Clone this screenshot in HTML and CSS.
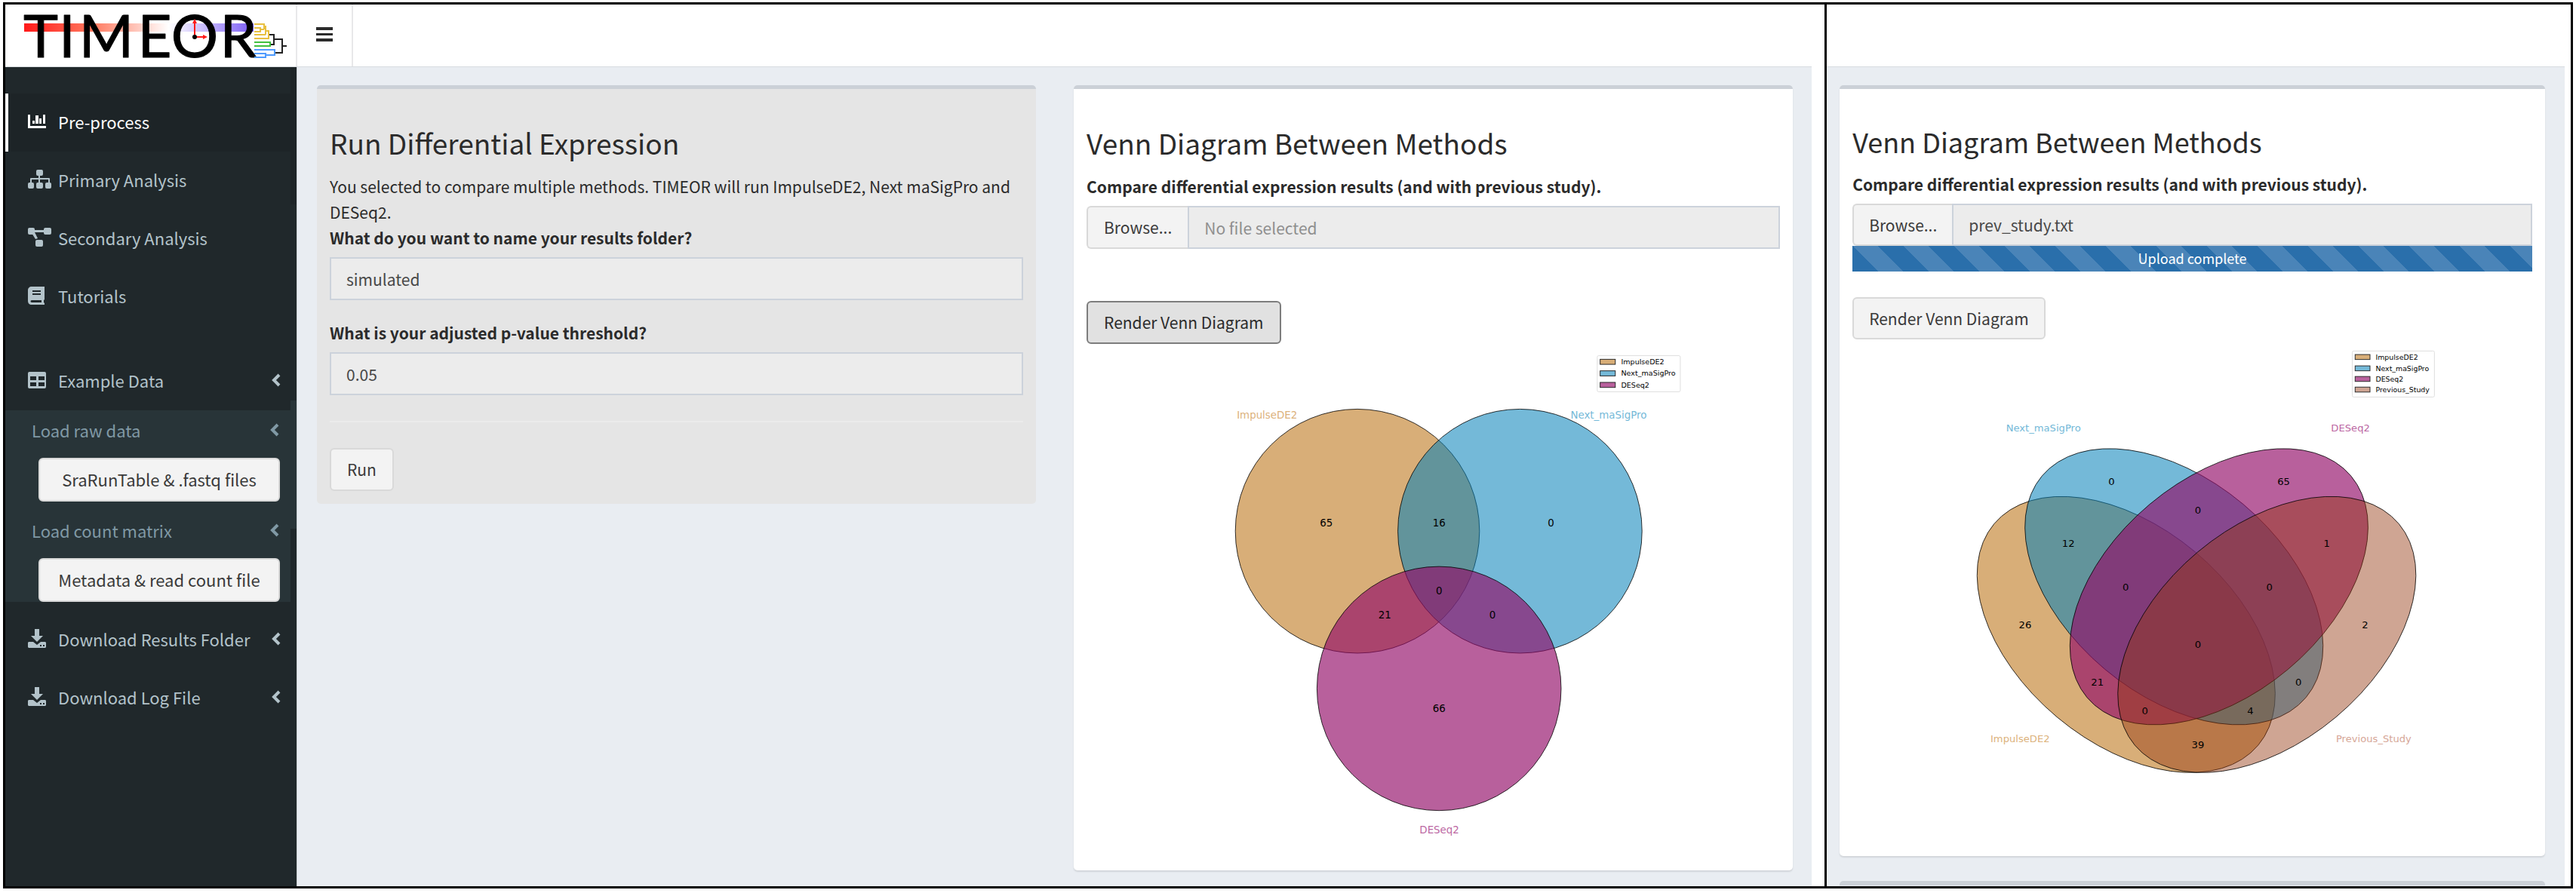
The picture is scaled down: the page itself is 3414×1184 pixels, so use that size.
FILE: index.html
```html
<!DOCTYPE html>
<html lang="en">
<head>
<meta charset="utf-8">
<title>TIMEOR</title>
<link rel="stylesheet" href="styles.css">
</head>
<body>
<div class="frame">
  <section class="pane pane-main">
    <header class="topbar">
      <a class="logo" href="#" aria-label="TIMEOR">
        <svg viewBox="0 0 379 82" width="379" height="82">
          <defs>
            <linearGradient id="heat">
              <stop offset="0" stop-color="#ff1a1a"/>
              <stop offset="0.3" stop-color="#ff7a60"/>
              <stop offset="0.63" stop-color="#ffffff"/>
              <stop offset="1" stop-color="#7b5cf5"/>
            </linearGradient>
          </defs>
          <rect x="25" y="25" width="304" height="11" fill="url(#heat)"/>
          <text class="logo-text" x="47 82 134 198 251 309" y="70">TIMEOR</text>
          <g stroke="#ff1a1a" stroke-width="2" fill="#ff1a1a">
            <path d="M251 43V24M251 43H264" fill="none"/>
            <path d="M251 19l3 6h-6zM268 43l-6 3v-6z" stroke="none"/>
          </g>
          <circle cx="251" cy="43" r="3"/>
          <g fill="none" stroke-width="2">
            <path stroke="#e8c040" d="M330 26H343V33M330 31H338V36H330M338 33H343M343 29H345V40M330 40H345M345 35H349V45H330"/>
            <path stroke="#40c040" d="M330 50H351V55H330"/>
            <path stroke="#4f9bff" d="M330 60H357V67H345M330 65H345V70H330"/>
            <path stroke="#222" d="M350 40H356V53H352M356 46H367V64H358M367 55H373"/>
          </g>
        </svg>
      </a>
      <button class="toggle" type="button" aria-label="Toggle navigation">
        <svg viewBox="0 0 22 19" width="22" height="19"><path d="M0 0h22v4H0zM0 8h22v3H0zM0 15h22v4H0z"/></svg>
      </button>
    </header>
    <div class="body">
      <nav class="sidebar">
        <ul class="menu">
          <li><a class="item active" href="#">
            <svg class="icon" viewBox="0 0 32 26"><path d="M0 4h3v15h21v3H0zM6 12h3v4H6zM10 5h4v11h-4zM15 9h3v7h-3zM20 4h3v12h-3z"/></svg>
            Pre-process</a></li>
          <li><a class="item" href="#">
            <svg class="icon" viewBox="0 0 32 26"><rect x="11" y="0" width="9" height="8" rx="2"/><rect x="0" y="17" width="8" height="8" rx="2"/><rect x="11" y="17" width="9" height="8" rx="2"/><rect x="23" y="17" width="8" height="8" rx="2"/><path d="M14 7h2v4h12q1 0 1 1v5h-2v-4H16v4h-2v-4H5v4H3v-5q0-1 1-1h10z"/></svg>
            Primary Analysis</a></li>
          <li><a class="item" href="#">
            <svg class="icon" viewBox="0 0 32 26"><rect x="0" y="0" width="9" height="9" rx="2"/><rect x="21" y="0" width="10" height="9" rx="2"/><rect x="10" y="16" width="10" height="9" rx="2"/><path d="M8 3h13v3H9l4 8-3 1-5-8z"/></svg>
            Secondary Analysis</a></li>
          <li><a class="item" href="#">
            <svg class="icon" viewBox="0 0 32 26"><path fill-rule="evenodd" d="M5 1h17v17l-1 1v3l1 1v2H5c-3 0-5-2-5-5V6c0-3 2-5 5-5zM6 6v2h11V6zM6 10v2h11v-2zM5 19c-2 0-2 3 0 3h13v-3z"/></svg>
            Tutorials</a></li>
          <li class="spaced"><a class="item" href="#">
            <svg class="icon" viewBox="0 0 32 26"><path fill-rule="evenodd" d="M2 2h20q2 0 2 2v18q0 2-2 2H2q-2 0-2-2V4q0-2 2-2zM3 8v5h8V8zM14 8v5h8V8zM3 16v5h8v-5zM14 16v5h8v-5z"/></svg>
            Example Data
            <svg class="chevron" viewBox="0 0 12 18"><path d="M10 2L3 9l7 7"/></svg></a>
            <div class="submenu">
              <a class="subitem" href="#">Load raw data<svg class="chevron" viewBox="0 0 12 18"><path d="M10 2L3 9l7 7"/></svg></a>
              <button class="btn side-btn" type="button">SraRunTable &amp; .fastq files</button>
              <a class="subitem" href="#">Load count matrix<svg class="chevron" viewBox="0 0 12 18"><path d="M10 2L3 9l7 7"/></svg></a>
              <button class="btn side-btn" type="button">Metadata &amp; read count file</button>
            </div></li>
          <li><a class="item" href="#">
            <svg class="icon" viewBox="0 0 32 26"><path fill-rule="evenodd" d="M9 0h6v9h5l-8 8-8-8h5zM1 17h6l5 4 5-4h6l1 1v6l-1 1H1l-1-1v-6zM16 21v2h2v-2zM20 21v2h2v-2z"/></svg>
            Download Results Folder
            <svg class="chevron" viewBox="0 0 12 18"><path d="M10 2L3 9l7 7"/></svg></a></li>
          <li><a class="item" href="#">
            <svg class="icon" viewBox="0 0 32 26"><path fill-rule="evenodd" d="M9 0h6v9h5l-8 8-8-8h5zM1 17h6l5 4 5-4h6l1 1v6l-1 1H1l-1-1v-6zM16 21v2h2v-2zM20 21v2h2v-2z"/></svg>
            Download Log File
            <svg class="chevron" viewBox="0 0 12 18"><path d="M10 2L3 9l7 7"/></svg></a></li>
        </ul>
      </nav>
      <main class="content">
        <section class="box box-muted">
          <h3>Run Differential Expression</h3>
          <p>You selected to compare multiple methods. TIMEOR will run ImpulseDE2, Next maSigPro and DESeq2.</p>
          <label class="field-label" for="folder">What do you want to name your results folder?</label>
          <input class="control" id="folder" type="text" value="simulated">
          <label class="field-label next" for="pvalue">What is your adjusted p-value threshold?</label>
          <input class="control" id="pvalue" type="text" value="0.05">
          <hr>
          <button class="btn" type="button">Run</button>
        </section>
        <section class="box">
          <h3>Venn Diagram Between Methods</h3>
          <label class="field-label" for="file-a">Compare differential expression results (and with previous study).</label>
          <div class="file-group">
            <label class="btn browse">Browse...<input class="file-input" id="file-a" type="file"></label>
            <input class="control" type="text" placeholder="No file selected" aria-label="Selected file" readonly>
          </div>
          <div class="progress-slot"></div>
          <button class="btn pressed" type="button">Render Venn Diagram</button>
          <svg class="plot" viewBox="0 0 960 705" role="img" aria-label="Three-way Venn diagram">
            <g class="shapes">
              <circle class="impulse" cx="375" cy="253" r="169"/>
              <circle class="next-ma" cx="600" cy="253" r="169"/>
              <circle class="deseq" cx="488" cy="471" r="169"/>
            </g>
            <g class="counts">
              <text x="332" y="246">65</text><text x="488" y="246">16</text><text x="643" y="246">0</text>
              <text x="488" y="341">0</text><text x="413" y="374">21</text><text x="562" y="374">0</text>
              <text x="488" y="503">66</text>
            </g>
            <text class="name-impulse" x="208" y="97">ImpulseDE2</text>
            <text class="name-next" x="670" y="97">Next_maSigPro</text>
            <text class="name-deseq" x="461" y="672">DESeq2</text>
            <g class="legend">
              <rect class="legend-box" x="707" y="10" width="115" height="50" rx="2"/>
              <rect class="impulse" x="711" y="15" width="21" height="7"/><text x="740" y="22">ImpulseDE2</text>
              <rect class="next-ma" x="711" y="31" width="21" height="7"/><text x="740" y="38">Next_maSigPro</text>
              <rect class="deseq" x="711" y="47" width="21" height="7"/><text x="740" y="54">DESeq2</text>
            </g>
          </svg>
        </section>
      </main>
    </div>
  </section>
  <section class="pane pane-side">
    <div class="topbar"></div>
    <div class="content content-side">
      <section class="box">
        <h3>Venn Diagram Between Methods</h3>
        <label class="field-label" for="file-b">Compare differential expression results (and with previous study).</label>
        <div class="file-group">
          <label class="btn browse">Browse...<input class="file-input" id="file-b" type="file"></label>
          <input class="control" type="text" value="prev_study.txt" aria-label="Selected file" readonly>
        </div>
        <div class="progress-slot"><div class="progress-bar">Upload complete</div></div>
        <button class="btn" type="button">Render Venn Diagram</button>
        <svg class="plot" viewBox="0 0 960 705" role="img" aria-label="Four-way Venn diagram">
          <g class="shapes" transform="translate(150 681) scale(676 -676)">
            <ellipse class="impulse" rx="0.36" ry="0.225" transform="translate(0.35 0.4) rotate(140)"/>
            <ellipse class="next-ma" rx="0.36" ry="0.225" transform="translate(0.45 0.5) rotate(140)"/>
            <ellipse class="deseq" rx="0.36" ry="0.225" transform="translate(0.544 0.5) rotate(40)"/>
            <ellipse class="previous" rx="0.36" ry="0.225" transform="translate(0.644 0.4) rotate(40)"/>
          </g>
          <g class="counts">
            <text x="244" y="402">26</text><text x="305" y="287">12</text><text x="366" y="199">0</text>
            <text x="488" y="240">0</text><text x="609" y="199">65</text><text x="670" y="287">1</text>
            <text x="724" y="402">2</text><text x="386" y="348">0</text><text x="589" y="348">0</text>
            <text x="488" y="429">0</text><text x="346" y="483">21</text><text x="630" y="483">0</text>
            <text x="413" y="523">0</text><text x="562" y="523">4</text><text x="488" y="571">39</text>
          </g>
          <text class="name-impulse" x="195" y="563">ImpulseDE2</text>
          <text class="name-next" x="217" y="124">Next_maSigPro</text>
          <text class="name-deseq" x="676" y="124">DESeq2</text>
          <text class="name-previous" x="683" y="563">Previous_Study</text>
          <g class="legend">
            <rect class="legend-box" x="706" y="10" width="116" height="65" rx="2"/>
            <rect class="impulse" x="710" y="15" width="21" height="7"/><text x="739" y="22">ImpulseDE2</text>
            <rect class="next-ma" x="710" y="31" width="21" height="7"/><text x="739" y="38">Next_maSigPro</text>
            <rect class="deseq" x="710" y="46" width="21" height="7"/><text x="739" y="53">DESeq2</text>
            <rect class="previous" x="710" y="61" width="21" height="7"/><text x="739" y="68">Previous_Study</text>
          </g>
        </svg>
      </section>
      <div class="box-edge"></div>
    </div>
  </section>
</div>
</body>
</html>
```
FILE: styles.css
```css
* { box-sizing: border-box; }
body {
  margin: 0;
  padding: 3px 4px 6px 4px;
  background: #fff;
  color: #2b2b2b;
  font: 21px/34px "Noto Sans CJK SC", "Open Sans", sans-serif;
}
.frame {
  display: flex;
  min-height: calc(100vh - 9px);
  border: 3px solid #000;
}
.pane { display: flex; flex-direction: column; min-width: 0; }
.pane-main { flex: 2414 1 0; padding-right: 17px; border-right: 3px solid #000; }
.pane-side { flex: 986 1 0; padding-right: 8px; }

.topbar { display: flex; height: 83px; border-bottom: 1px solid #d8dce0; }
.logo { width: 387px; border-right: 2px solid #e8e8ea; }
.logo svg { display: block; overflow: visible; }
.logo-text {
  font: 78px/78px Lato, sans-serif;
  text-anchor: middle;
  fill: #000;
  stroke: #000;
  stroke-width: 1px;
  stroke-linejoin: round;
}
.toggle { width: 74px; padding: 0; border: 0; border-right: 2px solid #e8e8ea; background: none; }
.toggle svg { fill: #2b2b2b; display: block; margin: -4px auto 0; }

.body { display: flex; flex: 1; }
.sidebar {
  flex: 0 0 387px;
  padding: 35px 8px 0 0;
  border-right: 1px solid #c8cdd2;
  background: linear-gradient(#1d2427 182px, #20282b 182px 442px, #283438 442px 612px, #20282b 612px) right / 8px 100% no-repeat #20282b;
  font-size: 22px;
}
.menu { list-style: none; margin: 0; padding: 0; }
.item {
  display: flex;
  align-items: center;
  height: 77px;
  padding: 0 13px 3px 26px;
  border-left: 4px solid transparent;
  color: #b3c3ca;
  text-decoration: none;
}
.active { background: #1d2427; border-left-color: #fff; color: #fff; }
.icon { width: 32px; height: 26px; margin-right: 8px; fill: currentColor; }
.chevron { width: 12px; height: 18px; margin-left: auto; fill: none; stroke: currentColor; stroke-width: 4; }
.spaced { margin: 35px 0 12px; }
.submenu { background: #283438; }
.subitem {
  display: flex;
  align-items: center;
  height: 55px;
  padding: 0 15px 4px 35px;
  color: #8099a5;
  text-decoration: none;
}
.submenu .side-btn { display: block; width: 320px; height: 58px; margin: 8px 0 12px 44px; padding: 0 0 2px; }
.submenu .side-btn:last-child { margin-bottom: 0; }

.content {
  display: grid;
  grid-template-columns: 1fr 1fr;
  gap: 50px;
  align-items: start;
  flex: 1;
  padding: 24px 25px 21px 26px;
  background: #e9edf2;
}
.content-side { grid-template-columns: 1fr; gap: 33px; align-content: start; padding: 24px 26px 0 17px; }
.box {
  padding: 17px;
  border-top: 5px solid #cbd0d7;
  border-radius: 5px;
  background: #fff;
  box-shadow: 0 2px 2px rgba(0, 0, 0, 0.1);
}
.box-muted { background: #e5e5e5; box-shadow: none; }
.box-edge { height: 6px; border-radius: 5px 5px 0 0; background: #cbd0d7; }
h3 { margin: 32px 0 18px; font-size: 37px; line-height: 45px; font-weight: 400; }
p { margin: 0; }
.field-label { display: block; margin-bottom: 9px; font-weight: 700; }
.next { margin-top: 26px; }
.control {
  display: block;
  width: 100%;
  height: 57px;
  padding: 0 20px;
  border: 2px solid #ccd2db;
  border-radius: 0;
  background: #ececec;
  color: #484848;
  font: inherit;
}
.control::placeholder { color: #8f8f8f; opacity: 1; }
hr { margin: 34px 0; border: 0; border-top: 2px solid #ebebeb; }
.btn {
  height: 57px;
  padding: 0 21px 1px;
  border: 2px solid #d9d9d9;
  border-radius: 6px;
  background: #f3f3f3;
  color: #3a3a3a;
  font: inherit;
}
.pressed { border-color: #7d7d7d; background: #e1e1e1; color: #2b2b2b; }
.file-group { display: flex; }
.browse { display: flex; align-items: center; border-right: 0; border-radius: 6px 0 0 6px; white-space: nowrap; }
.file-input { position: absolute; width: 1px; height: 1px; opacity: 0; }
.file-group .control { flex: 1; width: auto; min-width: 0; }
.progress-slot { height: 34px; margin-bottom: 35px; }
.progress-bar {
  height: 34px;
  color: #fff;
  font-size: 18px;
  line-height: 32px;
  text-align: center;
  background-color: #2a6fab;
  background-image: linear-gradient(45deg, rgba(255,255,255,.15) 25%, transparent 25%, transparent 50%, rgba(255,255,255,.15) 50%, rgba(255,255,255,.15) 75%, transparent 75%);
  background-size: 67px 67px;
}
.content-side h3 { margin: 30px 0 17px; font-size: 36px; }
.content-side .btn, .content-side .control { height: 56px; }
.content-side .btn { padding: 0 20px 1px; }
.content-side .progress-slot { margin-bottom: 34px; }

.plot { display: block; width: 100%; margin-top: 6px; font: 14px "DejaVu Sans", sans-serif; }
.shapes * { stroke: rgba(0, 0, 0, 0.8); stroke-width: 1px; vector-effect: non-scaling-stroke; }
.impulse { fill: rgba(190, 120, 30, 0.6); }
.next-ma { fill: rgba(2, 128, 184, 0.55); }
.deseq { fill: rgba(146, 10, 103, 0.65); }
.previous { fill: rgba(149, 55, 15, 0.45); }
.counts { text-anchor: middle; fill: #000; }
.name-impulse { fill: #dcb27c; }
.name-next { fill: #74b9d8; }
.name-deseq { fill: #bc68a3; }
.name-previous { fill: #d6a798; }
.legend { font-size: 10px; }
.legend rect { stroke: #222; }
.legend .legend-box { fill: #fff; stroke: #dcdcdc; }
```
